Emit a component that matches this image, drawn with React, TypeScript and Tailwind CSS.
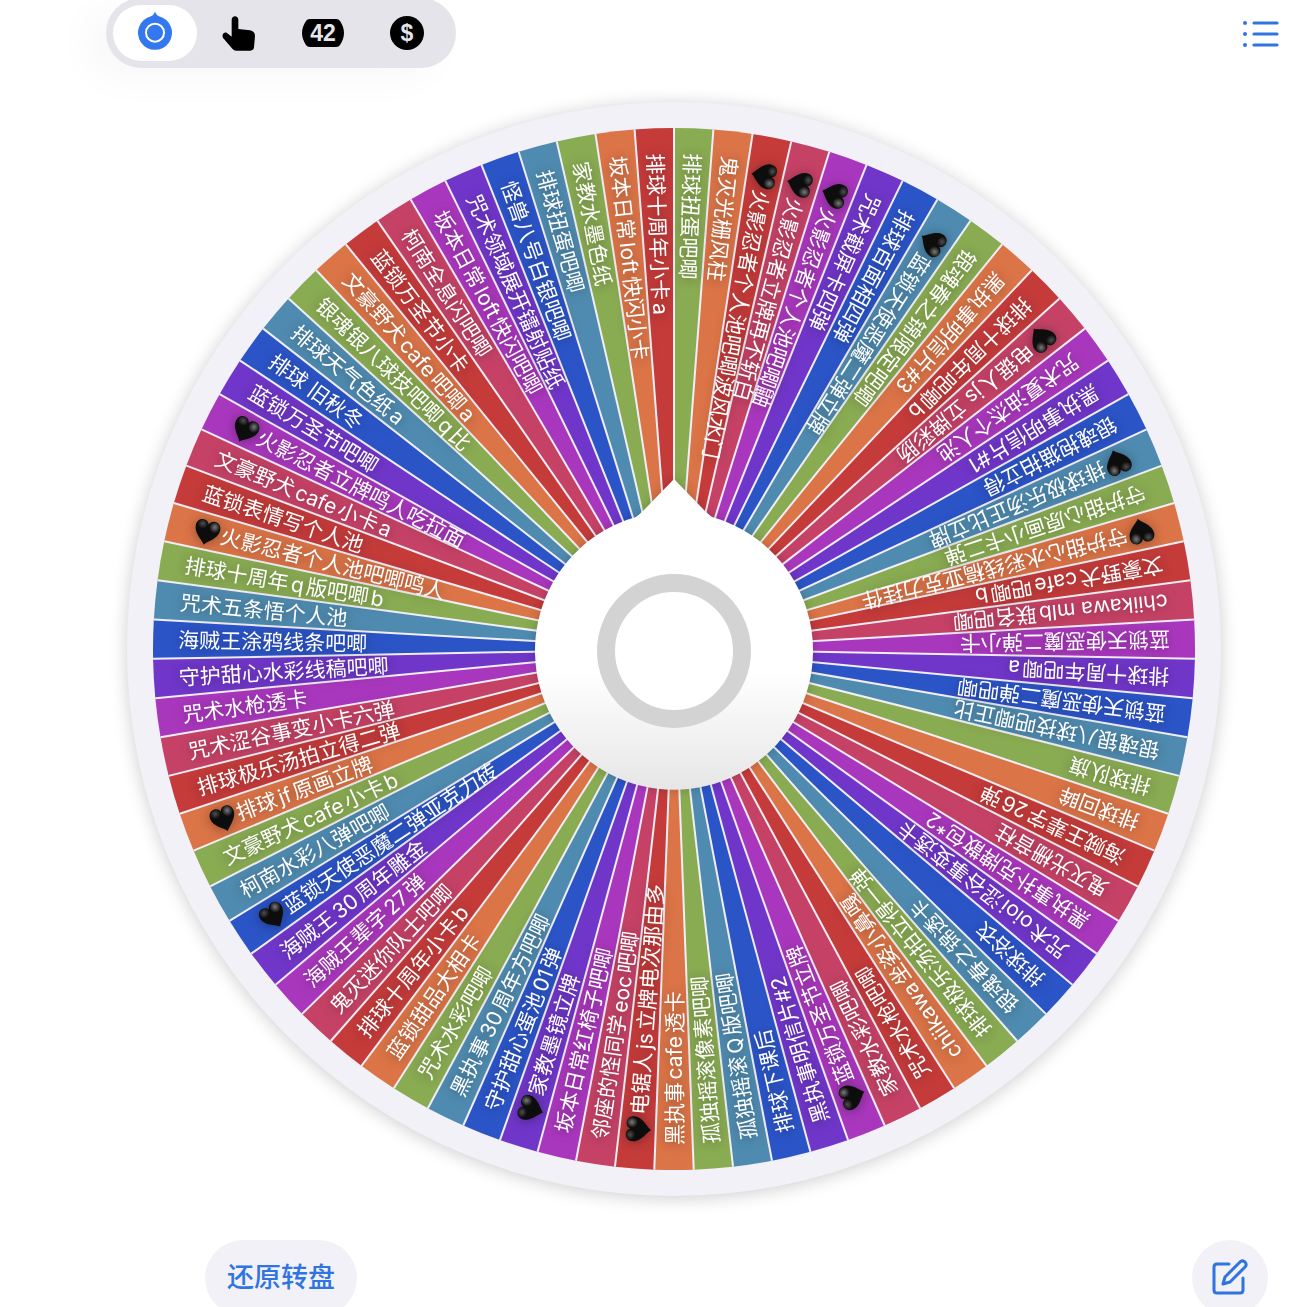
import React, { useState } from 'react';
import clsx from 'clsx';

const COLORS = ['#89ab52', '#db7447', '#c43b3a', '#c54266', '#a937bd', '#7036c9', '#2b54c7', '#4f8bb0'];

// Clockwise from the top. A leading heart marks a favourite.
const ITEMS = [
  '排球扭蛋吧唧',
  '鬼灭光栅风柱',
  '🖤火影忍者个人池吧唧波风水门',
  '🖤火影忍者立牌再不斩白',
  '🖤火影忍者个人池吧唧鼬',
  '咒术截屏卡四弹',
  '排球百面相四弹',
  '🖤蓝锁天使恶魔二弹立牌',
  '银魂春之锦限定吧唧',
  '黑执事明信片#3',
  '排球十周年吧唧b',
  '🖤电锯人js 立牌彩肠',
  '咒术夏油杰个人池',
  '黑执事明信片#1',
  '银魂抱猫拍立得',
  '🖤排球极乐汤正比立牌',
  '守护甜心原画小卡二弹',
  '🖤守护甜心水彩线稿亚克力挂件',
  '文豪野犬cafe吧唧b',
  'chiikawa mlb联名吧唧',
  '蓝锁天使恶魔二弹小卡',
  '排球十周年吧唧a',
  '蓝锁天使恶魔二弹吧唧',
  '银魂银八球技吧唧正比',
  '排球队旗',
  '排球回眸',
  '海贼王辈字26弹',
  '鬼灭光栅音柱',
  '黑执事扑克牌散包*2',
  '咒术oioi涩谷事变透卡',
  '排球浴衣',
  '银魂春之锦透卡',
  '排球极乐汤拍立得一弹',
  'chiikawa坐姿小鼻嘎',
  '咒术水枪吧唧',
  '家教水彩吧唧',
  '🖤蓝锁万圣节立牌',
  '黑执事明信片#2',
  '排球下课后',
  '孤独摇滚Q版吧唧',
  '孤独摇滚像素吧唧',
  '黑执事cafe透卡',
  '🖤电锯人js立牌电次那由多',
  '邻座的怪同学eoc吧唧',
  '坂本日常红椅子吧唧',
  '🖤家教墨镜立牌',
  '守护甜心蛋池01弹',
  '黑执事30周年方吧唧',
  '咒术水彩吧唧',
  '蓝锁甜品大相卡',
  '排球十周年小卡b',
  '鬼灭迷你队士吧唧',
  '海贼王辈字27弹',
  '海贼王30周年雕金',
  '🖤蓝锁天使恶魔二弹亚克力砖',
  '柯南水彩八弹吧唧',
  '文豪野犬cafe小卡b',
  '🖤排球jf原画立牌',
  '排球极乐汤拍立得二弹',
  '咒术涩谷事变小卡六弹',
  '咒术水枪透卡',
  '守护甜心水彩线稿吧唧',
  '海贼王涂鸦线条吧唧',
  '咒术五条悟个人池',
  '排球十周年q版吧唧b',
  '🖤火影忍者个人池吧唧鸣人',
  '蓝锁表情写个人池',
  '文豪野犬cafe小卡a',
  '🖤火影忍者立牌鸣人吃拉面',
  '蓝锁万圣节吧唧',
  '排球 旧秋冬',
  '排球天气色纸a',
  '银魂银八球技吧唧q比',
  '文豪野犬cafe吧唧a',
  '蓝锁万圣节小卡',
  '柯南全息闪吧唧',
  '坂本日常loft快闪吧唧',
  '咒术领域展开镭射贴纸',
  '怪兽八号白银吧唧',
  '排球扭蛋吧唧',
  '家教水墨色纸',
  '坂本日常loft快闪小卡',
  '排球十周年小卡a',
];

const HEART = '🖤';
const RADIUS = 521;
const STEP = 360 / ITEMS.length;

const pointAt = (deg: number) => {
  const rad = (deg * Math.PI) / 180;
  return `${(RADIUS * Math.sin(rad)).toFixed(2)} ${(-RADIUS * Math.cos(rad)).toFixed(2)}`;
};

const Heart: React.FC = () => (
  <g transform="translate(-494 -12)">
    <path
      d="M12.5 25.5C11.500 22.500 0 16.500 0 8.200C0 3.200 3 .6 6.700 .6C9.700 .6 11.600 2.300 12.500 4.600C13.400 2.300 15.300 .6 18.300 .6C22 .6 25 3.200 25 8.200C25 16.500 13.500 22.500 12.500 25.500Z"
      fill="#0d0d0d"
    />
    <ellipse cx="19" cy="7" rx="5.500" ry="6" fill="url(#gloss)" />
    <ellipse cx="6.500" cy="6" rx="5.500" ry="5" fill="url(#gloss)" opacity="0.6" />
  </g>
);

const Wheel: React.FC = () => (
  <div className="w-full max-w-[1094px] rounded-full bg-[#f2f1f7] shadow-[0_2px_18px_rgba(0,0,0,0.2)]">
    <svg viewBox="-547 -547 1094 1094" className="block w-full rounded-full">
      <defs>
        <radialGradient id="gloss" cx="0.5" cy="0.4" r="0.5">
          <stop offset="0" stopColor="#7a7a7a" />
          <stop offset="1" stopColor="#7a7a7a" stopOpacity="0" />
        </radialGradient>
        <linearGradient id="hub" x1="0" y1="0" x2="0" y2="1">
          <stop offset="0.62" stopColor="#fff" />
          <stop offset="1" stopColor="#e6e6e6" />
        </linearGradient>
      </defs>

      {/* 扇区 */}
      {ITEMS.map((_, i) => (
        <path
          key={i}
          d={`M0 0L${pointAt(i * STEP)}A${RADIUS} ${RADIUS} 0 0 1 ${pointAt((i + 1) * STEP)}Z`}
          fill={COLORS[i % COLORS.length]}
        />
      ))}
      {ITEMS.map((_, i) => (
        <path key={i} d={`M0 0L${pointAt(i * STEP)}`} stroke="#f1eef6" strokeWidth="2" />
      ))}

      {/* 文字 */}
      <g className="drop-shadow-[0_1px_6px_rgba(0,0,0,0.35)]">
        {ITEMS.map((item, i) => {
          const marked = item.startsWith(HEART);
          return (
            <g key={i} transform={`rotate(${(i + 0.5) * STEP - 270})`}>
              {marked && <Heart />}
              <text
                x={marked ? -467 : -496}
                y={8}
                className="fill-white font-[Inter,'Noto_Sans_CJK_SC',sans-serif] text-[21px] [text-autospace:normal]"
              >
                {marked ? item.slice(HEART.length) : item}
              </text>
            </g>
          );
        })}
      </g>

      {/* 指针 */}
      <path
        d="M0 -170L30 -139Q34 -135 38 -132A139 139 0 1 1 -38 -132Q-34 -135 -30 -139Z"
        fill="url(#hub)"
        className="drop-shadow-[0_0_6px_rgba(0,0,0,0.2)]"
      />
      <circle cy="2" r="68" fill="#fff" stroke="#d3d3d3" strokeWidth="18" />
    </svg>
  </div>
);

const WheelIcon = () => (
  <svg width="36" height="40" viewBox="0 0 108 120" className="-mt-1">
    <path d="M54 2Q58 12 66 16A51 51 0 1 1 42 16Q50 12 54 2Z" fill="currentColor" />
    <circle cx="54" cy="65" r="27" fill="none" stroke="#fff" strokeWidth="6" />
  </svg>
);

const FingerIcon = () => (
  <svg width="34" height="35" viewBox="0 0 102 105">
    <path
      d="M29 11C29 -3 49 -3 49 11V39L84 43Q99 46 99 60L96 94Q95 104 85 104H43Q36 104 31 98L4 67C-3 58 6 46 15 51L29 62Z"
      fill="currentColor"
    />
  </svg>
);

const NumberIcon = () => (
  <svg width="42" height="30" viewBox="0 0 42 30">
    <path d="M8 1H34Q37 1 38 3Q42 9 42 15Q42 21 38 27Q37 29 34 29H8Q5 29 4 27Q0 21 0 15Q0 9 4 3Q5 1 8 1Z" fill="currentColor" />
    <text x="21" y="23" textAnchor="middle" className="fill-[#e5e4ea] font-['Liberation_Sans',sans-serif] text-[23px] font-bold">
      42
    </text>
  </svg>
);

const CoinIcon = () => (
  <svg width="34" height="34" viewBox="0 0 34 34">
    <circle cx="17" cy="17" r="17" fill="currentColor" />
    <text x="17" y="25" textAnchor="middle" className="fill-[#e5e4ea] font-['Liberation_Sans',sans-serif] text-[23px] font-bold">
      $
    </text>
  </svg>
);

const MODES = [
  { id: 'wheel', label: '转盘', icon: WheelIcon },
  { id: 'finger', label: '手指', icon: FingerIcon },
  { id: 'number', label: '数字', icon: NumberIcon },
  { id: 'coin', label: '硬币', icon: CoinIcon },
];

const App: React.FC = () => {
  const [mode, setMode] = useState('wheel');

  return (
    <div className="h-screen overflow-hidden bg-white font-[Inter,'Noto_Sans_CJK_SC',sans-serif]">
      <header className="-mt-0.5 flex items-center justify-between pr-7 pl-[106px]">
        <div className="flex rounded-full bg-[#e5e4ea] p-[7px] shadow-[-20px_10px_40px_rgba(0,0,0,0.03)]">
          {MODES.map(({ id, label, icon: Icon }) => (
            <button
              key={id}
              type="button"
              aria-label={label}
              onClick={() => setMode(id)}
              className={clsx(
                'flex h-14 w-21 items-center justify-center rounded-full',
                mode === id ? 'bg-white text-[#3478f0]' : 'text-black'
              )}
            >
              <Icon />
            </button>
          ))}
        </div>
        <button type="button" aria-label="列表" className="text-[#2f74e0]">
          <svg width="38" height="28" viewBox="0 0 38 28" fill="none" stroke="currentColor" strokeWidth="3.200" strokeLinecap="round">
            <path d="M12 4H35M12 15H35M12 26H35" />
            <path d="M3 4H3.010M3 15H3.010M3 26H3.010" strokeWidth="4" />
          </svg>
        </button>
      </header>

      <main className="mt-[34px] flex justify-center pl-10">
        <Wheel />
      </main>

      <footer className="mt-11 flex items-center justify-between pr-10 pl-[205px]">
        <button type="button" className="h-[76px] rounded-full bg-[#f2f1f7] px-[22px] text-[27px] font-medium text-[#2f74e0]">
          还原转盘
        </button>
        <button
          type="button"
          aria-label="编辑"
          className="flex size-[76px] items-center justify-center rounded-full bg-[#f2f1f7] text-[#2f74e0]"
        >
          <svg width="38" height="38" viewBox="0 0 38 38" fill="none" stroke="currentColor" strokeWidth="3" strokeLinecap="round" strokeLinejoin="round">
            <path d="M18 5H6Q3 5 3 8V31Q3 34 6 34H29Q32 34 32 31V19" />
            <path d="M12 25L14 18L29.500 2.500Q32 1 34 3Q36 5 34.500 7.500L19 23Z" />
          </svg>
        </button>
      </footer>
    </div>
  );
};

export default App;
